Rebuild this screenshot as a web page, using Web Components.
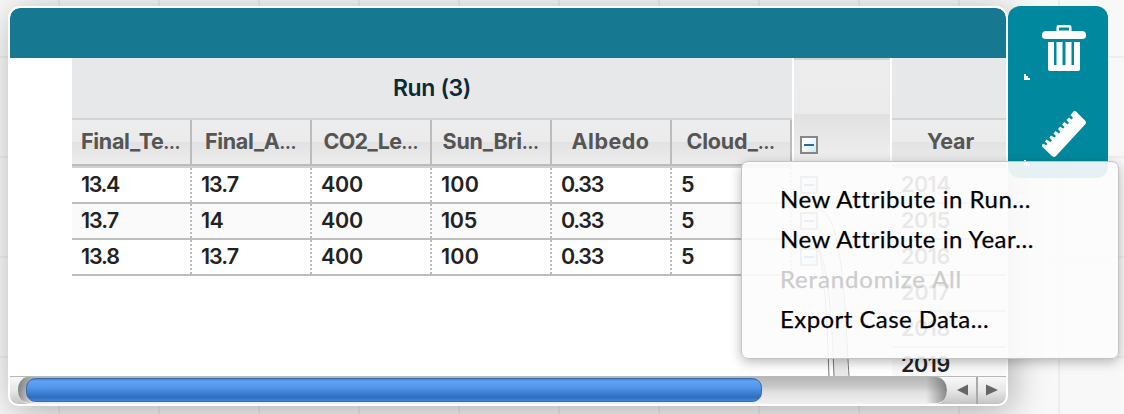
<!DOCTYPE html>
<html><head><meta charset="utf-8"><title>Case table</title>
<style>
html,body{margin:0;width:1124px;height:414px;overflow:hidden}
body{background:#f8f8f8;font-family:Inter,sans-serif}
</style></head><body><case-workspace></case-workspace>
<script>
function define(name, html, init){
  const t=document.createElement('template');t.innerHTML=html;
  customElements.define(name,class extends HTMLElement{
    connectedCallback(){
      if(this.shadowRoot)return;
      this.attachShadow({mode:'open'}).appendChild(t.content.cloneNode(true));
      if(init)init.call(this,this.shadowRoot);
    }
  });
}
/* A single line label whose tracking is set so that it fills the width w. */
define('fit-label',`<style>:host{display:inline-block;white-space:nowrap}span{display:inline-block}::slotted(b){font-size:15px;font-weight:900}</style><span><slot></slot></span>`,function(r){
  const s=r.querySelector('span'),w=+this.getAttribute('w'),n=this.textContent.length;
  const nat=s.getBoundingClientRect().width;
  if(w)s.style.letterSpacing=(w-nat)/n+'px';
});
define('attr-header',`<style>:host{box-sizing:border-box;display:flex;align-items:center;justify-content:center;width:120px;height:44px;flex:none;border-right:2px solid #bcbcbc;background:linear-gradient(#ededed 0,#ebebeb 50%,#e2e2e2 51%,#ededed 100%);color:#555;font:700 21.5px Inter,sans-serif;padding:0 1px 3px 0}</style><slot></slot>`);
define('data-cell',`<style>:host{box-sizing:border-box;display:block;width:120px;height:36px;flex:none;padding-left:9px;line-height:32px;border-bottom:2px solid #bdbdbd;color:#222;font-size:21.5px;font-weight:600;background-image:repeating-linear-gradient(#bbb 0 2px,transparent 2px 4px);background-size:2px 34px;background-position:right 0;background-repeat:no-repeat}</style><slot></slot>`);
define('toggle-box',`<style>:host{box-sizing:border-box;display:flex;width:18px;height:18px;border:2px solid #858789;background:linear-gradient(135deg,#fff 20%,#c8ecfa);align-items:center;justify-content:center}i{width:10px;height:2px;background:#286a9d}</style><i></i>`);
define('run-table',`<style>:host{display:block;width:720px;flex:none}.t{box-sizing:border-box;height:62px;border-bottom:2px solid #d2d3d4;background:#e7e8ea;display:flex;align-items:center;justify-content:center;color:#0d2935;font-weight:600;font-size:23px}.h{display:flex;border-bottom:2px solid #bbb}.g{height:2px;background:#d1d1d1}.r{display:flex}.r:nth-child(even){background:#fafafa}</style>
<div class="t"><fit-label w="78">Run (3)</fit-label></div>
<div class="h"><attr-header><fit-label w="99">Final_Te<b>…</b></fit-label></attr-header><attr-header><fit-label w="91">Final_A<b>…</b></fit-label></attr-header><attr-header><fit-label w="94">CO2_Le<b>…</b></fit-label></attr-header><attr-header><fit-label w="96">Sun_Bri<b>…</b></fit-label></attr-header><attr-header><fit-label w="78">Albedo</fit-label></attr-header><attr-header><fit-label w="88">Cloud_<b>…</b></fit-label></attr-header></div><div class="g"></div>`,function(r){
 [['13.4:38','13.7:37','400:42','100:38','0.33:42','5:13'],['13.7:37','14:22','400:42','105:36','0.33:42','5:13'],['13.8:38','13.7:37','400:42','100:38','0.33:42','5:13']].forEach(row=>{
  const d=document.createElement('div');d.className='r';
  d.innerHTML=row.map(v=>{const[a,w]=v.split(':');return `<data-cell><fit-label w="${w}">${a}</fit-label></data-cell>`}).join('');r.appendChild(d);});
});
define('relation-strip',`<style>:host{position:relative;box-sizing:border-box;display:block;width:100px;height:318px;border:solid #fff;border-width:0 2px;flex:none}.h{box-sizing:border-box;height:108px;border-top:2px solid #d3d3d3;border-bottom:1px solid #ddd;background:linear-gradient(#ededed 0,#ebebeb 51%,#e1e1e1 52%,#f0f0f0 100%);padding:76px 0 0 6px}.b{padding:10px 0 0 6px;display:grid;gap:18px}svg{position:absolute;left:0;top:110px}</style>
<div class="h"><toggle-box></toggle-box></div><div class="b"><toggle-box></toggle-box><toggle-box></toggle-box><toggle-box></toggle-box></div>
<svg width="96" height="208" fill="none" stroke="#777" stroke-width="1"><path d="M40 208C38 160 38 150 37 110L48 110C52 150 53 175 54 208" fill="#e9e9e9" stroke="none"/><path d="M24 78C32 110 33 160 35 208M24 78C36 105 38 160 40 208M24 42C50 42 51 150 55 208"/></svg>`);
define('year-table',`<style>:host{display:block;width:114px;height:318px;overflow:hidden;flex:none}.t{box-sizing:border-box;height:62px;background:#e7e8ea;border-bottom:2px solid #d2d3d4}.h{border-bottom:2px solid #bbb}.g{height:2px;background:#d1d1d1}.r:nth-child(even){background:#fafafa}</style>
<div class="t"></div><div class="h"><attr-header><fit-label w="47">Year</fit-label></attr-header></div><div class="g"></div>`,function(r){
 [2014,2015,2016,2017,2018,2019].forEach(y=>{const d=document.createElement('div');d.className='r';d.innerHTML=`<data-cell><fit-label w="49">${y}</fit-label></data-cell>`;r.appendChild(d);});
});
define('scroll-bar',`<style>:host{display:flex;height:28px;border-radius:0 0 8px 8px;overflow:hidden;background:linear-gradient(#b5b5b5 0,#c6c6c6 35%,#e2e2e2 60%,#f0f0f0 100%)}svg{display:block}</style>
<svg width="996" height="28"><defs><linearGradient id="b" x2="0" y2="1"><stop stop-color="#3f7fce"/><stop offset=".12" stop-color="#62a2f4"/><stop offset=".4" stop-color="#5096ea"/><stop offset=".62" stop-color="#3f80d2"/><stop offset=".82" stop-color="#2e6cc0"/><stop offset="1" stop-color="#4a8ad8"/></linearGradient><linearGradient id="g" x2="0" y2="1"><stop stop-color="#fafafa"/><stop offset=".5" stop-color="#e8e8e8"/><stop offset="1" stop-color="#c4c4c4"/></linearGradient><linearGradient id="k"><stop stop-color="#666" stop-opacity="0"/><stop offset="1" stop-color="#555" stop-opacity=".65"/></linearGradient><linearGradient id="l"><stop stop-color="#666" stop-opacity=".75"/><stop offset="1" stop-color="#888" stop-opacity=".1"/></linearGradient></defs>
<path d="M0 0H18Q8 3 8 14T18 28H0Z" fill="url(#g)"/><path d="M24 1H18Q8 3 8 14T18 27H24Z" fill="url(#l)"/>
<path d="M916 1H926Q937 3 937 14T928 27H916Z" fill="url(#k)"/><path d="M926 0H996V28H928Q937 25 937 14T926 0Z" fill="url(#g)"/>
<rect x="16.5" y="2.5" width="735" height="23" rx="9" fill="url(#b)" stroke="#356bab"/><path d="M967 0V28" stroke="#aaa" stroke-width="2"/><path d="M0 .5H996" stroke="#b9b9b9"/><path d="M947 14L958 8.500V19.500ZM987 8.500V19.500L976 19.500Z" fill="none"/><path d="M947 14L958 8.500V19.500ZM988 14L976 8.500V19.500Z" fill="#666"/></svg>`);
define('table-window',`<style>:host{box-sizing:border-box;display:flex;flex-direction:column;width:1000px;height:400px;border:2px solid #fff;border-radius:12px 12px 10px 10px;background:#fff;box-shadow:4px 6px 36px rgba(0,0,0,.3);overflow:hidden}.bar{height:50px;background:#177991;border-radius:9px 9px 0 0;flex:none}.body{display:flex;height:318px;padding-left:62px;overflow:hidden;flex:none}</style>
<div class="bar"></div><div class="body"><run-table></run-table><relation-strip></relation-strip><year-table></year-table></div><scroll-bar></scroll-bar>`);
define('tool-palette',`<style>:host{display:block;width:100px;height:172px;border-radius:12px;background:#00899e}svg{display:block}</style>
<svg width="100" height="172" fill="#fff"><path fill-rule="evenodd" d="M48.500 25V21Q48.500 19 50.500 19H61.500Q63.500 19 63.500 21V25H74Q78 25 78 29V30Q78 33 74 33H38Q34 33 34 30V29Q34 25 38 25ZM51 24.500H61V21.500H51Z"/><path fill-rule="evenodd" d="M40 36H72V63Q72 65 70 65H42Q40 65 40 63ZM46 36V59H48.500V36ZM54.500 36V59H57.500V36ZM63.500 36V59H66V36Z"/><path d="M16 68h2v2h2v2h2v2h-6zM16 154h2v2h2v2h2v2h-6z"/>
<path d="M65.500 105.500Q67 104.500 68.500 106L77.500 115Q78.500 116.500 77.500 118L48 150Q46 152 44 150L34 140.500V138.500L36 138L38 139.500L39.500 138L37 135.500L38.500 133.500L42.500 136L44 134.500L41.500 131.500L43 129.500L46.500 131.500L48 130L45.500 127.500L47.500 125L51 127.500L52.500 126L50 123L52 120.500L55 122.500L56.500 121L54 118.500L56.500 116L59.500 118.500L61 117L58.500 114L61 111.500L63.500 113.500L65 112L62.500 109Z"/></svg>`);
define('context-menu',`<style>:host{position:absolute;box-sizing:border-box;display:flex;flex-direction:column;left:741px;top:161px;width:378px;height:198px;border:1px solid #c3c3c3;border-radius:7px;background:rgba(252,252,252,.91);box-shadow:0 3px 12px rgba(0,0,0,.28);padding:17px 38px;font:400 24px/40px Lato,sans-serif;color:#000;-webkit-text-stroke:.25px}.d{color:#ccc}div{height:40px}</style>
<div><fit-label w="250">New Attribute in Run...</fit-label></div><div><fit-label w="253">New Attribute in Year...</fit-label></div><div class="d"><fit-label w="182">Rerandomize All</fit-label></div><div><fit-label w="209">Export Case Data...</fit-label></div>`);
define('case-workspace',`<style>:host{position:relative;box-sizing:border-box;display:flex;align-items:flex-start;width:1124px;height:414px;padding:6px 8px;overflow:hidden;background:repeating-linear-gradient(90deg,transparent 0 58px,#ededed 58px 60px,transparent 60px 100px),repeating-linear-gradient(transparent 0 56px,#eee 56px 58px,transparent 58px 100px),#f8f8f8}</style>
<table-window></table-window><tool-palette></tool-palette><context-menu></context-menu>`);
</script></body></html>
